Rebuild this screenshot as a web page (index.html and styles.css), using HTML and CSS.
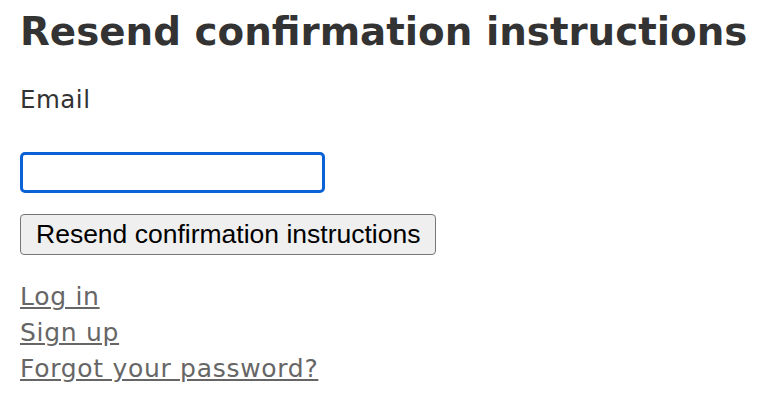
FILE: index.html
```html
<!DOCTYPE html>
<html lang="en">
<head>
  <meta charset="UTF-8" />
  <meta name="viewport" content="width=device-width, initial-scale=1.0" />
  <title>Resend confirmation instructions</title>
  <link rel="stylesheet" href="styles.css">
</head>
<body>
  <h2 class="titulo">Resend confirmation instructions</h2>

  <form class="formulario" action="#" method="post">
    <div class="campo">
      <label for="user_email">Email</label>
      <input type="email" id="user_email" name="user[email]" class="entrada" autofocus />
    </div>

    <div class="acciones">
      <input type="submit" value="Resend confirmation instructions" class="boton" />
    </div>
  </form>

  <div class="enlaces">
    <a href="#">Log in</a>
    <a href="#">Sign up</a>
    <a href="#">Forgot your password?</a>
  </div>
</body>
</html>
```

FILE: styles.css
```css
body {
  margin: 0;
  padding: 9px 20px;
  font-family: 'DejaVu Sans', 'Verdana', sans-serif;
  color: #333;
  background-color: #fff;
}

.titulo {
  margin: 0;
  font-size: 38.8px;
  line-height: 46px;
  font-weight: bold;
  white-space: nowrap;
}

.formulario {
  margin-top: 27px;
}

.campo label {
  display: block;
  font-size: 24.5px;
  line-height: 36px;
  letter-spacing: 0.5px;
}

.entrada {
  display: block;
  box-sizing: border-box;
  width: 305px;
  height: 41px;
  margin-top: 34px;
  border: 3px solid #0b62d6;
  border-radius: 5px;
  outline: none;
  padding: 0 6px;
  font-size: 20px;
}

.acciones {
  margin-top: 21px;
}

.boton {
  box-sizing: border-box;
  height: 41px;
  padding: 0 15px;
  border: 1px solid #767676;
  border-radius: 4px;
  background-color: #efefef;
  color: #000;
  font-family: 'Liberation Sans', Arial, sans-serif;
  font-size: 26.5px;
}

.enlaces {
  display: flex;
  flex-direction: column;
  align-items: flex-start;
  margin-top: 24px;
}

.enlaces a {
  color: #666;
  font-size: 25px;
  line-height: 36px;
  letter-spacing: 0.7px;
  text-decoration: underline;
}
```
